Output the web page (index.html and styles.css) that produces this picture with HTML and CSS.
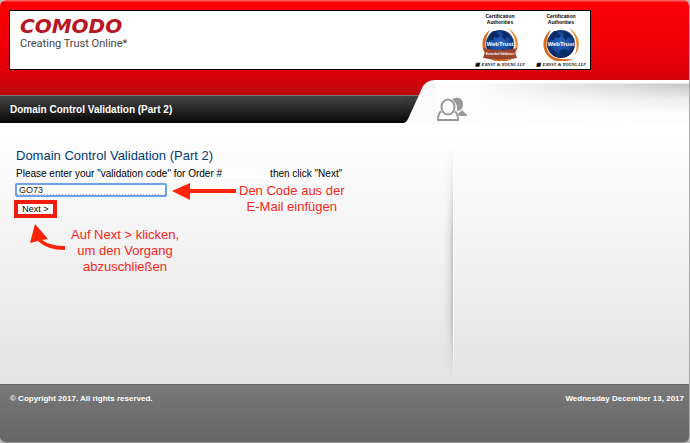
FILE: index.html
```html
<!DOCTYPE html>
<html lang="en">
<head>
<meta charset="utf-8">
<meta name="viewport" content="width=device-width, initial-scale=1">
<title>Domain Control Validation (Part 2)</title>
<link rel="stylesheet" href="styles.css">
</head>
<body>
<svg class="defs" width="0" height="0" aria-hidden="true">
  <defs>
    <radialGradient id="sea" cx="50%" cy="45%" r="55%">
      <stop offset="0" stop-color="#2c66c4"/>
      <stop offset="0.6" stop-color="#174a9c"/>
      <stop offset="1" stop-color="#0a2050"/>
    </radialGradient>
    <g id="globe">
      <path d="M8 4C-1 10-2 23 5 30S22 37 30 33C20 34 10 33 6 27S3 12 8 4Z" fill="#d9691e"/>
      <path d="M26 2C36 8 39 20 32 29C35 20 34 10 26 2Z" fill="#f08a2a"/>
      <circle cx="18" cy="18" r="14" fill="url(#sea)"/>
      <path d="M7 9l4-4 5 0-1 3 3 1-2 3-4-1-1 3-4 0zM19 5l6 2 4 5-4-1-2 3-3-3 1-3zM6 24l4 0 3 3-2 3zM16 25l5-2 5 2-2 5-4 1-3-3z" fill="#0b2b68"/>
    </g>
  </defs>
</svg>
<div class="page">
  <header class="header">
    <div class="banner">
      <div class="brand">
        <span class="brand-name">COMODO</span>
        <span class="brand-line">Creating Trust Online*</span>
      </div>
      <div class="seals">
        <div class="seal">
          <span>Certification<br>Authorities</span>
          <svg viewBox="0 0 36 35" width="36" height="35" role="img" aria-label="WebTrust Extended Validation">
            <use href="#globe"/>
            <text class="globe-text" x="18" y="20" text-anchor="middle">WebTrust</text>
            <path d="M1 22Q18 26 35 22L33 26L35 32Q18 35 1 32L3 26Z" fill="#98452c"/>
            <text class="ribbon-text" x="18" y="29" text-anchor="middle">Extended Validation</text>
          </svg>
          <span class="auditor">&#9638; Ernst &amp; Young llp</span>
        </div>
        <div class="seal">
          <span>Certification<br>Authorities</span>
          <svg viewBox="0 0 36 35" width="36" height="35" role="img" aria-label="WebTrust">
            <use href="#globe"/>
            <text class="globe-text" x="18" y="20" text-anchor="middle">WebTrust</text>
          </svg>
          <span class="auditor">&#9638; Ernst &amp; Young llp</span>
        </div>
      </div>
    </div>
    <div class="tabs">
      <div class="title-bar">Domain Control Validation (Part 2)</div>
      <svg class="slope" viewBox="0 0 32 44" width="32" height="44" aria-hidden="true">
        <defs>
          <linearGradient id="bar" x1="0" y1="0" x2="0" y2="1">
            <stop offset="0" stop-color="#444"/><stop offset="1" stop-color="#080808"/>
          </linearGradient>
        </defs>
        <rect x="0" y="15" width="24" height="28" fill="url(#bar)"/>
        <rect x="0" y="15" width="20" height="1" fill="#777"/>
        <path d="M0 44V43Q3 43 5 39L16 15L19 8Q23 0 32 0V44Z" fill="#fbfbfb"/>
        <path d="M18 14L20 9Q24 4 32 4V8Q25 6 18 14Z" fill="#f0f0f0"/>
      </svg>
      <div class="tab-panel">
        <svg viewBox="0 0 30 24" width="30" height="24" role="img" aria-label="Users">
          <path d="M15 3C18-1 26 0 26 7C26 11 24 14 20 14C21 9 19 5 15 3ZM21 17L25 13L30 18V19H22Z" fill="#999"/>
          <path d="M5 14C2 15 1 18 1 23H21C21 18 20 15 17 14Z" fill="#fff" stroke="#999" stroke-width="2"/>
          <ellipse cx="11" cy="10" rx="8" ry="9" fill="#fff"/>
          <ellipse cx="11" cy="10" rx="6.500" ry="7.500" fill="#fff" stroke="#999" stroke-width="2"/>
        </svg>
      </div>
    </div>
  </header>
  <main class="main">
    <form class="content">
      <h1>Domain Control Validation (Part 2)</h1>
      <label for="code">Please enter your "validation code" for Order #<span class="order"></span>then click "Next"</label>
      <div class="step">
        <div class="fields">
          <input id="code" type="text" value="GO73" spellcheck="false">
          <button type="button">Next &gt;</button>
        </div>
        <svg class="arrow" viewBox="0 0 64 20" width="64" height="20" aria-hidden="true">
          <path d="M0 8L18 0V6H64V10H18V17Z" fill="#ff2408"/>
        </svg>
        <p class="note">Den Code aus der<br>E-Mail einfügen</p>
      </div>
      <div class="step second">
        <svg viewBox="0 0 36 28" width="36" height="28" aria-hidden="true">
          <path d="M5 0L18 15L12 16Q20 22 35 22V26Q17 26 8 17L0 19Z" fill="#ff2408"/>
        </svg>
        <p class="note">Auf Next &gt; klicken,<br>um den Vorgang<br>abzuschließen</p>
      </div>
    </form>
    <aside class="side"></aside>
  </main>
  <footer class="footer">
    <span>© Copyright 2017. All rights reserved.</span>
    <span>Wednesday December 13, 2017</span>
  </footer>
</div>
</body>
</html>
```
FILE: styles.css
```css
* { box-sizing: border-box; }

body {
  margin: 0;
  background: #bbb;
  font-family: "Liberation Sans", Arial, sans-serif;
  font-size: 10px;
  color: #000;
}

.defs { position: absolute; }

.page {
  min-height: 100vh;
  display: flex;
  flex-direction: column;
  border-right: 1px solid #aaa;
  border-bottom: 1px solid #999;
  border-radius: 6px;
  overflow: hidden;
  background: linear-gradient(#fff 124px, #f9f9f9 190px, #e3e3e3 384px);
}

.header {
  padding-top: 10px;
  background: linear-gradient(#ff5a5a 0, #ff5a5a 1px, #fd0006 2px, #ee0008 50px, #d9000a 76px, #b90a10 95px) top / 100% 95px no-repeat;
}

.banner {
  display: flex;
  justify-content: space-between;
  height: 60px;
  margin: 0 98px 10px 9px;
  padding: 0 3px 0 10px;
  border: 1px solid #000;
  background: #fff;
}

.brand {
  display: flex;
  flex-direction: column;
  padding-top: 3px;
}

.brand-name {
  font: italic bold 20px/24px "DejaVu Sans", sans-serif;
  color: #b91524;
}

.brand-line {
  font: 11px/12px Roboto, sans-serif;
  color: #444;
}

.seals {
  display: flex;
  gap: 9px;
  padding-top: 2px;
}

.seal {
  display: flex;
  flex-direction: column;
  align-items: center;
  width: 52px;
  font-size: 5px;
  line-height: 6px;
  font-weight: bold;
  text-align: center;
  white-space: nowrap;
}

.seal svg { margin-top: 1px; }

.globe-text {
  font-size: 6px;
  font-weight: bold;
  fill: #fff;
}

.ribbon-text {
  font-size: 3px;
  fill: #fff;
}

.auditor {
  font: italic small-caps bold 5px/8px "Liberation Serif", serif;
}

.tabs {
  display: flex;
  height: 44px;
}

.title-bar {
  flex: 400;
  margin-top: 15px;
  height: 28px;
  padding-left: 10px;
  border-top: 1px solid #777;
  background: linear-gradient(#444, #080808);
  color: #fff;
  font-size: 10px;
  line-height: 28px;
  font-weight: bold;
}

.slope { flex: none; }

.tab-panel {
  flex: 257;
  padding: 17px 0 0 2px;
  background:
    linear-gradient(#fff 3px, transparent 3px),
    linear-gradient(90deg, #fdfdfd 15%, transparent),
    linear-gradient(#fff 3px, #c6c6c6 4px, #eee 20px, #fdfdfd 34px);
}

.main {
  flex: 1;
  display: grid;
  grid-template-columns: 453fr 236fr;
}

.content { padding: 24px 0 0 16px; }

h1 {
  margin: 0;
  color: #003a75;
  font-size: 13px;
  line-height: 16px;
  font-weight: normal;
}

label {
  display: block;
  margin-top: 4px;
  line-height: 12px;
  white-space: nowrap;
}

.order {
  display: inline-block;
  width: 48px;
  height: 10px;
  background: #fff;
  vertical-align: middle;
}

.step {
  display: flex;
  align-items: flex-start;
  margin-top: 3px;
}

.fields {
  display: flex;
  flex-direction: column;
  align-items: flex-start;
  gap: 3px;
  margin-left: -1px;
}

input {
  width: 152px;
  height: 14px;
  padding: 0 2px;
  border: 2px solid #6aa5ec;
  border-radius: 2px;
  outline: 0;
  background: repeating-linear-gradient(90deg, #e99 0 1px, #fff 1px 3px) bottom / 100% 1px no-repeat #fff;
  color: #222;
  font: 9px/10px "Liberation Sans", Arial, sans-serif;
}

button {
  width: 43px;
  height: 18px;
  margin-left: -1px;
  padding: 0;
  border: 4px solid #f21c0d;
  background: #fff;
  color: #000;
  font: 9px/10px "Liberation Sans", Arial, sans-serif;
}

.arrow {
  margin-left: 5px;
}

.note {
  margin: 0;
  color: #f8261a;
  font-size: 13px;
  line-height: 16px;
  text-align: center;
  white-space: nowrap;
}

.arrow + .note { margin-left: 3px; }

.second {
  gap: 5px;
  margin: 6px 0 0 14px;
}

.second .note { padding-top: 3px; }

.side {
  margin: 22px 0 6px;
  background:
    linear-gradient(#fff0, #fff 30%, #fff 80%, #fff0) left / 1px 100% no-repeat;
  position: relative;
}

.side::before {
  content: "";
  position: absolute;
  right: 100%;
  width: 10px;
  height: 100%;
  background: linear-gradient(90deg, #0000, #0000000c 60%, #0003);
  mask-image: linear-gradient(transparent, #000 40%, #000 75%, transparent);
}

.footer {
  display: flex;
  justify-content: space-between;
  min-height: 58px;
  padding: 9px 5px 0 10px;
  border-top: 1px solid #666;
  background: linear-gradient(#797979, #666464);
  color: #fff;
  font-size: 8px;
  line-height: 10px;
  font-weight: bold;
}
```
